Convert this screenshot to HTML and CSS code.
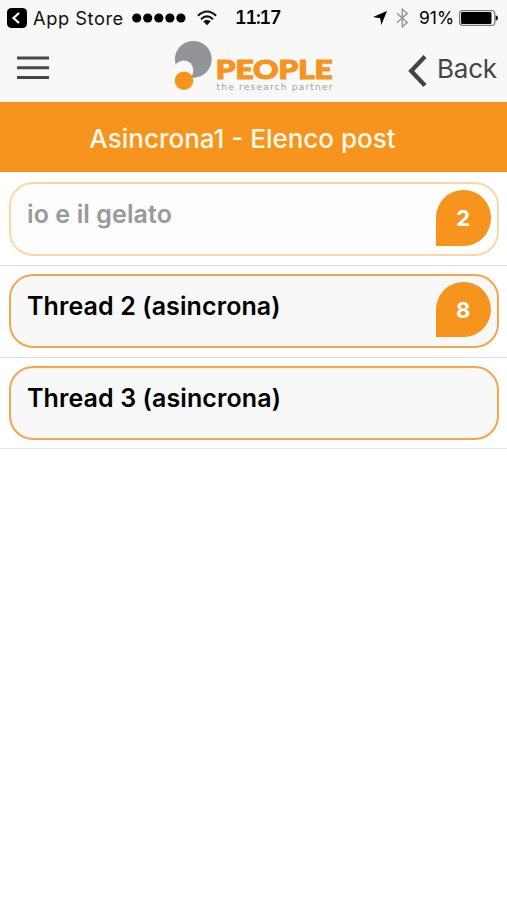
FILE: index.html
```html
<!DOCTYPE html>
<html lang="it">
<head>
<meta charset="utf-8">
<title>Asincrona1 - Elenco post</title>
<link rel="stylesheet" href="styles.css">
</head>
<body>
<header class="header">
  <div class="status">
    <svg class="return-icon" width="20" height="20" viewBox="0 0 20 20"><rect width="20" height="20" rx="4.5" fill="#000"/><path d="M12 5 6.5 10 12 15" fill="none" stroke="#fff" stroke-width="2.2"/></svg>
    <span class="return-label">App Store</span>
    <svg class="signal" width="54" height="10" viewBox="0 0 54 10"><circle cx="4.7" cy="5" r="4.6"/><circle cx="15.7" cy="5" r="4.6"/><circle cx="26.8" cy="5" r="4.6"/><circle cx="37.9" cy="5" r="4.6"/><circle cx="48.9" cy="5" r="4.6"/></svg>
    <svg class="wifi" width="20" height="16" viewBox="0 0 20 16"><g fill="none" stroke="#111" stroke-width="2.1"><path d="M.9 5.8Q10-2.8 19.1 5.8"/><path d="M4 9.2Q10 3.6 16 9.2"/></g><path d="M6.2 11.3Q10 8.2 13.8 11.3L10 15.2Z" fill="#111"/></svg>
    <span class="clock">11:17</span>
    <svg class="location" width="14" height="14" viewBox="0 0 14 14"><path d="M14 0 8.3 14 7.2 7.2 0 6.1Z"/></svg>
    <svg class="bluetooth" width="13" height="20" viewBox="0 0 13 20"><path d="M1 5.2 11.2 14.6 6.3 18.8V1.2l4.9 4.2L1 14.8" fill="none" stroke="#999" stroke-width="1.5"/></svg>
    <span class="charge">91%</span>
    <svg class="battery" width="39" height="16" viewBox="0 0 39 16"><rect x=".6" y=".6" width="35.2" height="14.8" rx="3.2" fill="#fff" stroke="#777" stroke-width="1.2"/><rect x="2" y="2" width="30.5" height="12" rx="1.5"/><path d="M36.7 5.2Q39 6 39 8t-2.3 2.8Z"/></svg>
  </div>
  <nav class="nav">
    <svg class="menu" width="32" height="24" viewBox="0 0 32 24"><path d="M0 2h32M0 11.7h32M0 21.4h32" stroke="#444748" stroke-width="3"/></svg>
    <svg class="logo" width="162" height="54" viewBox="0 0 162 54">
      <circle cx="20.3" cy="20.3" r="18.4" fill="#929497"/>
      <circle cx="10.7" cy="31.2" r="9.7" fill="#f8f8f8"/>
      <path d="M0 27h2.2L7 39H0Z" fill="#f8f8f8"/>
      <circle cx="11" cy="41.7" r="9.3" fill="#f7941e"/>
      <text class="logo-name" x="42.7" y="39.8" textLength="117" lengthAdjust="spacingAndGlyphs">PEOPLE</text>
      <text class="logo-tag" x="43.5" y="51.3" textLength="116" lengthAdjust="spacing">the research partner</text>
    </svg>
    <a class="back"><svg width="19" height="32" viewBox="0 0 19 32"><path d="M17 1.5 3.2 16 17 30.5" fill="none" stroke="#444" stroke-width="4.3"/></svg><span>Back</span></a>
  </nav>
</header>
<h1 class="title"><span>Asincrona1 - Elenco post</span></h1>
<main class="list">
  <div class="row read"><article class="card"><h2>io e il gelato</h2><span class="count">2</span></article></div>
  <div class="row"><article class="card"><h2>Thread 2 (asincrona)</h2><span class="count">8</span></article></div>
  <div class="row"><article class="card"><h2>Thread 3 (asincrona)</h2></article></div>
</main>
</body>
</html>
```

FILE: styles.css
```css
* { box-sizing: border-box; }
body { margin: 0; background: #fff; font-family: Inter, "Liberation Sans", sans-serif; color: #000; }
svg { display: block; flex: none; }
.header { height: 102px; background: #f8f8f8; }
.status { display: flex; align-items: center; height: 35px; padding-left: 7px; font-size: 18.3px; white-space: nowrap; }
.status span { flex: none; line-height: 22px; }
.return-label { width: 92px; margin-left: 6px; color: #111; letter-spacing: 0.55px; }
.signal { margin-left: 7px; }
.wifi { margin-left: 11px; }
.clock { width: 48px; margin-left: 18px; font-weight: 600; font-size: 18px; font-variant-numeric: tabular-nums; letter-spacing: -1.2px; }
.location { margin-left: 90px; }
.bluetooth { margin-left: 9px; }
.charge { width: 38px; margin-left: 10px; font-size: 17.5px; letter-spacing: 0; }
.battery { margin-left: 2px; }
.nav { display: flex; align-items: flex-start; height: 67px; padding-left: 17px; }
.menu { margin-top: 21px; }
.logo { margin: 4px 0 0 124px; }
.logo-name { font: 900 27px Lato, sans-serif; fill: #f7941e; stroke: #f7941e; stroke-width: 1.2px; }
.logo-tag { font: 9px "DejaVu Sans", sans-serif; fill: #a0a0a3; }
.back { display: flex; margin: 20px 0 0 73px; color: #444; font-size: 26px; line-height: 32px; }
.back span { margin: -2px 0 0 10px; letter-spacing: -0.2px; }
.title { display: flex; justify-content: center; align-items: center; height: 69.5px; margin: 0; padding-right: 22px; background: #f7941e; color: #fff8e8; font-size: 26px; font-weight: 500; letter-spacing: 0; white-space: nowrap; }
.title span { margin-top: 3px; }
.list { padding-top: 2.5px; }
.row { height: 91.8px; padding: 8px 8px 0 9px; border-bottom: 1.5px solid #dedfe0; }
.card { display: flex; justify-content: space-between; height: 74px; padding: 6px 6px 0 16px; border: 2px solid #f3a64b; border-radius: 24px; background: #f8f8f8; }
.card h2 { margin: 7px 0 0; font-size: 25px; font-weight: 600; line-height: 34px; letter-spacing: 0.1px; white-space: nowrap; }
.count { display: flex; align-items: center; justify-content: center; width: 55.5px; height: 55.5px; padding-top: 1px; border-radius: 50% 50% 50% 0; background: #f7941e; color: #fff; font-size: 22px; font-weight: 700; }
.read .card { border-color: #fbd6a8; background: #fdfdfd; }
.read h2 { color: #999; }
```
